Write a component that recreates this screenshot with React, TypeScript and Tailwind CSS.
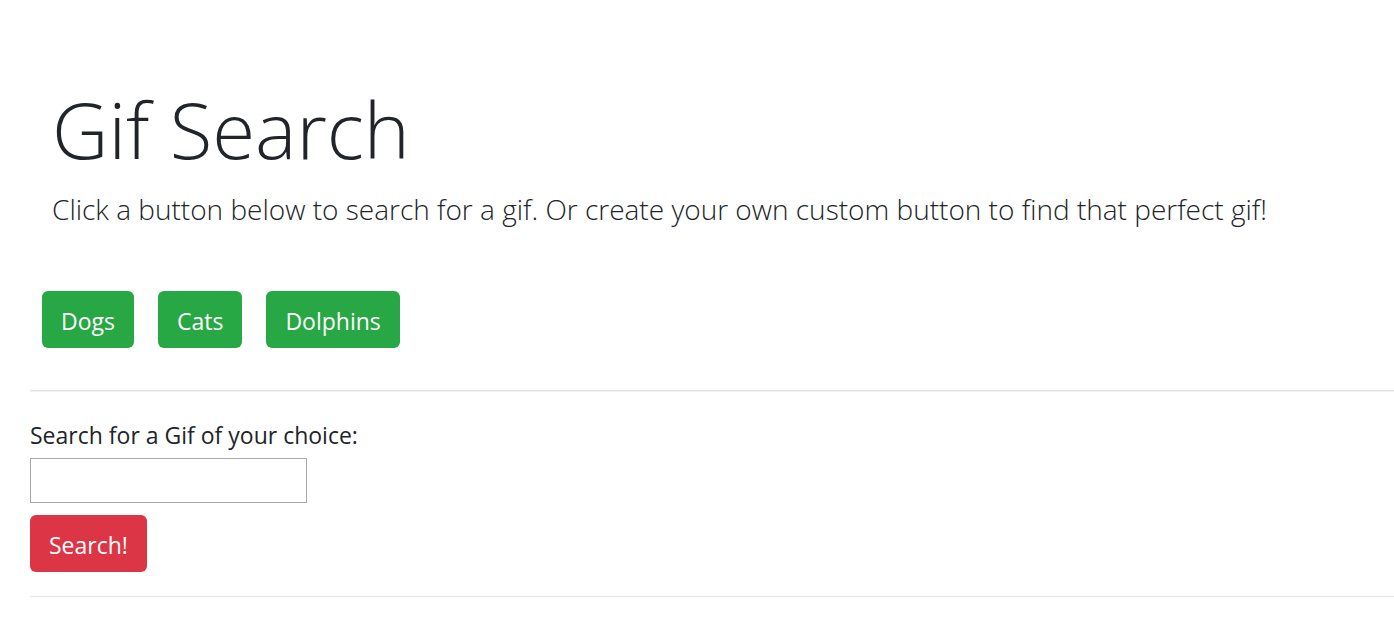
const topics = ["Dogs", "Cats", "Dolphins"];

export default function App() {
  return (
    <main className="overflow-hidden bg-white pl-[30px] font-['Open_Sans','Noto_Sans',sans-serif] text-[23px] text-[#212529]">
      <header className="px-[22px] pt-[79px]">
        <h1 className="text-[78px] leading-[100px] font-light">Gif Search</h1>
        <p className="mt-2 text-[28px] leading-[44px] font-light">
          Click a button below to search for a gif. Or create your own custom button to find that perfect gif!
        </p>
      </header>
      <div className="mt-[60px] flex flex-wrap gap-6 pl-3">
        {topics.map((topic) => (
          <button key={topic} type="button" className="h-[57px] rounded-md bg-[#28a745] px-[19px] pt-1 text-white">
            {topic}
          </button>
        ))}
      </div>
      <hr className="mt-[42px] h-[2px] border-t border-b border-t-[#e3e3e3] border-b-[#f1f1f1]" />
      <form className="flex flex-col items-start" onSubmit={(e) => e.preventDefault()}>
        <label htmlFor="gif-input" className="mt-[25px] leading-9">
          Search for a Gif of your choice:
        </label>
        <input id="gif-input" type="text" className="mt-[5px] h-[45px] w-[277px] border border-[#a9a9a9] px-1" />
        <button type="submit" className="mt-3 h-[57px] rounded-md bg-[#dc3545] px-[19px] pt-1 text-white">
          Search!
        </button>
      </form>
      <hr className="mt-6 border-[#e5e5e5]" />
    </main>
  );
}
